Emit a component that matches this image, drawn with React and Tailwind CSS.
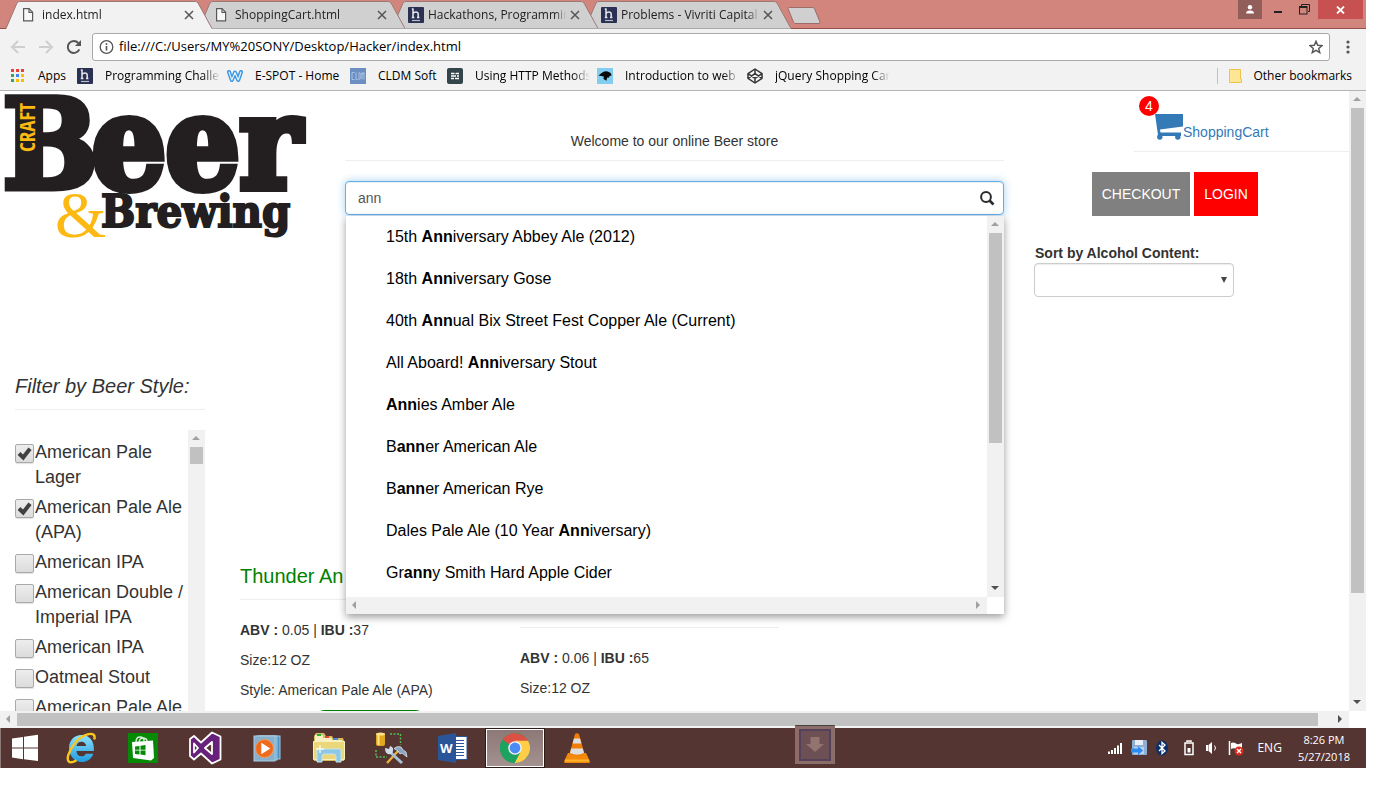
import React from "react";

const uiFont = "font-['Open_Sans','Noto_Sans',sans-serif]";
const pageFont = "font-['Liberation_Sans',Arial,sans-serif]";

/* ---------- small icons ---------- */

function FileIcon() {
  return (
    <svg width="16" height="16" viewBox="0 0 16 16" fill="none" stroke="#5a5a5a" strokeWidth="1.2">
      <path d="M1.6 1.6h5.4l3.600 3.600v8.600H1.6z" fill="#f8f8f8" />
      <path d="M7 1.6v3.800h3.800" />
    </svg>
  );
}

function HIcon() {
  return (
    <svg width="16" height="16" viewBox="0 0 16 16">
      <rect width="16" height="16" rx="1" fill="#2a3152" />
      <path d="M5 1.5v9M5 6.5q1-1.4 3-1.4t2.2 2v3.4M3.8 2h1.5M3.8 10.5h2.6M9 10.5h2.4" stroke="#e8e8f0" strokeWidth="1.5" fill="none" />
      <path d="M4 13.5h8" stroke="#b9bccb" strokeWidth="1.2" />
    </svg>
  );
}

function AppsIcon() {
  const colors = ["#ea4335", "#ea4335", "#ea4335", "#34a853", "#4285f4", "#fbbc05", "#34a853", "#fbbc05", "#fbbc05"];
  return (
    <svg width="16" height="16" viewBox="0 0 16 16">
      {colors.map((c, i) => (
        <rect key={i} x={1 + (i % 3) * 5} y={1 + Math.floor(i / 3) * 5} width="3" height="3" fill={c} />
      ))}
    </svg>
  );
}

function WIcon() {
  return (
    <svg width="16" height="16" viewBox="0 0 16 16" fill="none" strokeLinejoin="round" strokeLinecap="round">
      <path d="M2 4l2.800 8L8 4.500l3.200 7.500L14 4" stroke="#3d96e2" strokeWidth="4" />
      <path d="M2 4l2.800 8L8 4.500l3.200 7.500L14 4" stroke="#e4f3fd" strokeWidth="1.200" />
    </svg>
  );
}

function CldmIcon() {
  return (
    <svg width="16" height="16" viewBox="0 0 16 16">
      <rect width="16" height="16" fill="#6b8fc3" />
      <path d="M4.500 4.500H2v7h2.500M6 4.500v7h2M9 4.500v7q2 0 2-3.500t-2-3.500M12 11.500v-7l1 2 1-2v7" stroke="#a9c1e3" fill="none" />
    </svg>
  );
}

function HttpIcon() {
  return (
    <svg width="16" height="16" viewBox="0 0 16 16">
      <rect width="16" height="16" rx="2" fill="#33444a" />
      <path d="M4 5.500h3.500M8.500 5.500H12M4 8h5M10 8h2M4 10.500h3M8 10.500h4" stroke="#fff" strokeWidth="1.6" />
    </svg>
  );
}

function BirdIcon() {
  return (
    <svg width="16" height="16" viewBox="0 0 16 16">
      <rect width="16" height="16" fill="#83cdf0" />
      <path d="M1.500 7.500l2.500-2q3-2.700 6.500-2 4 1 4 4l-2 .5-.4 1.500-2.100.3-.5 3-3-1.800.3-2.500z" fill="#080808" />
    </svg>
  );
}

function CodepenIcon() {
  return (
    <svg width="16" height="16" viewBox="0 0 16 16" fill="none" stroke="#333" strokeWidth="1.5" strokeLinejoin="round">
      <path d="M8 1l7 4.700v4.600L8 15l-7-4.700V5.700z" />
      <path d="M1 5.700l7 4.700 7-4.700M1 10.300l7-4.700 7 4.700M8 1v4.600M8 10.400V15" />
    </svg>
  );
}

function CloseX() {
  return (
    <svg width="10" height="10" viewBox="0 0 10 10" stroke="#555" strokeWidth="1.5">
      <path d="M1 1l8 8M9 1l-8 8" />
    </svg>
  );
}

/* ---------- browser chrome ---------- */

const tabs = [
  { title: "index.html", icon: <FileIcon />, active: true, z: "z-40" },
  { title: "ShoppingCart.html", icon: <FileIcon />, z: "z-30" },
  { title: "Hackathons, Programmin", icon: <HIcon />, z: "z-20" },
  { title: "Problems - Vivriti Capital", icon: <HIcon />, z: "z-10" },
];

function Tab({ title, icon, active, z }) {
  const fill = active ? "#f2f2f2" : "#d0d0d0";
  return (
    <div className={`relative -mr-[13px] flex h-full w-[206px] items-center pt-px pr-4 pl-4 ${z}`}>
      <svg className="absolute inset-0 h-full w-full" viewBox="0 0 206 29" preserveAspectRatio="none">
        <path d="M0 29L11 3q1-2 3-2h175q2 0 3 2L206 29z" fill={fill} />
        <path d="M0 28.500L11 3q1-1.500 3-1.500h175q2 0 3 1.500L206 28.500" fill="none" stroke="#9b7a76" />
        {active ? null : <path d="M0 28.500H206" stroke="#aaa" />}
      </svg>
      <button className="relative flex items-center gap-1 text-left">
        <span className="shrink-0">{icon}</span>
        <span className="w-[138px] overflow-hidden whitespace-nowrap [mask-image:linear-gradient(to_right,#000_92%,transparent)]">{title}</span>
      </button>
      <button aria-label="Close tab" className="relative ml-1 shrink-0">
        <CloseX />
      </button>
    </div>
  );
}

function TabStrip() {
  return (
    <div className="flex h-[29px] items-stretch border-b border-[#94504e] bg-[#d1857c] pl-[6px]">
      <div className="-mb-px flex text-[12px] text-[#222]">
        {tabs.map((t) => (
          <Tab key={t.title} {...t} />
        ))}
      </div>
      <button aria-label="New tab" className="ml-[9px] self-start pt-[7px]">
        <svg width="34" height="17" viewBox="0 0 34 17">
          <path d="M1 1.500Q1 .5 2.500.5H25.500q1.500 0 2 1.200L33 15q.3 1.500-1 1.500H9q-2 0-2.500-1.200z" fill="#d0d0d0" stroke="#9b6c68" />
        </svg>
      </button>
      <div className="ml-auto flex h-[19px] items-stretch pr-[3px]">
        <button aria-label="Profile" className="flex w-6 items-center justify-center bg-[#915e59]">
          <svg width="10" height="10" viewBox="0 0 10 10" fill="#fff">
            <circle cx="5" cy="2.300" r="2.200" />
            <path d="M1 8.500Q1 5.500 5 5.500T9 8.500z" />
          </svg>
        </button>
        <button aria-label="Minimize" className="flex w-8 items-center justify-center pt-1">
          <span className="h-[2px] w-2 bg-[#222]" />
        </button>
        <button aria-label="Restore" className="flex w-6 items-center pl-[5px]">
          <svg width="11" height="11" viewBox="0 0 11 11" fill="none" stroke="#222">
            <path d="M2.500 2V.5h8v7H9" />
            <rect x=".5" y="2.500" width="7.500" height="7.500" />
            <path d="M.5 3.500H8" />
          </svg>
        </button>
        <button aria-label="Close" className="flex w-[45px] items-center justify-center bg-[#c75050]">
          <svg width="9" height="8" viewBox="0 0 9 8" stroke="#fff" strokeWidth="1.800">
            <path d="M1 .5l7 7M8 .5l-7 7" />
          </svg>
        </button>
      </div>
    </div>
  );
}

function AddressBar() {
  return (
    <div className="flex h-9 items-center pr-4 pl-[10px]">
      <button aria-label="Back" className="w-7">
        <svg width="16" height="16" viewBox="0 0 16 16" fill="none" stroke="#cfcfcf" strokeWidth="2">
          <path d="M15 8H2.500M8 2L2 8l6 6" />
        </svg>
      </button>
      <button aria-label="Forward" className="w-7">
        <svg width="16" height="16" viewBox="0 0 16 16" fill="none" stroke="#cfcfcf" strokeWidth="2">
          <path d="M1 8h12.500M8 2l6 6-6 6" />
        </svg>
      </button>
      <button aria-label="Reload" className="w-[26px]">
        <svg width="16" height="16" viewBox="0 0 16 16" fill="none" stroke="#555" strokeWidth="2">
          <path d="M13.300 10.300A6 6 0 1 1 12.300 4" />
          <path d="M15 1v6H9z" fill="#555" stroke="none" />
        </svg>
      </button>
      <div className="flex h-7 min-w-0 flex-1 items-center gap-1 rounded-[3px] border border-[#a9a9a9] bg-white px-[6px]">
        <svg width="16" height="16" viewBox="0 0 16 16" fill="none" stroke="#555">
          <circle cx="7.500" cy="8" r="6.300" strokeWidth="1.300" />
          <path d="M7.500 7v4.500M7.500 4.300V6" strokeWidth="1.600" />
        </svg>
        <input
          aria-label="Address"
          defaultValue="file:///C:/Users/MY%20SONY/Desktop/Hacker/index.html"
          className="min-w-0 flex-1 bg-transparent text-[13px] text-black outline-none"
        />
        <svg width="14" height="14" viewBox="0 0 14 14" fill="none" stroke="#555" strokeWidth="1.400">
          <path d="M7 1.200l1.700 4.100 4.400.3-3.400 2.800 1.100 4.300L7 10.400l-3.800 2.300 1.100-4.300L.9 5.600l4.400-.3z" />
        </svg>
      </div>
      <button aria-label="Menu" className="ml-4">
        <svg width="4" height="14" viewBox="0 0 4 14" fill="#555">
          <circle cx="2" cy="2" r="1.600" />
          <circle cx="2" cy="7" r="1.600" />
          <circle cx="2" cy="12" r="1.600" />
        </svg>
      </button>
    </div>
  );
}

const bookmarks = [
  { label: "Apps", icon: <AppsIcon />, width: "w-[28px]" },
  { label: "Programming Challe", icon: <HIcon />, width: "w-[110px]", fade: true },
  { label: "E-SPOT - Home", icon: <WIcon />, width: "w-[84px]" },
  { label: "CLDM Soft", icon: <CldmIcon />, width: "w-[58px]" },
  { label: "Using HTTP Methods", icon: <HttpIcon />, width: "w-[110px]", fade: true },
  { label: "Introduction to web", icon: <BirdIcon />, width: "w-[110px]", fade: true },
  { label: "jQuery Shopping Car", icon: <CodepenIcon />, width: "w-[110px]", fade: true },
];

function BookmarkBar() {
  return (
    <div className="flex h-[26px] items-center gap-[11px] border-b border-[#b4b4b4] pr-[14px] pb-1 pl-[10px] text-[12px] text-black">
      {bookmarks.map((b) => (
        <a key={b.label} href="#bookmark" className="flex items-center gap-3">
          {b.icon}
          <span
            className={`${b.width} whitespace-nowrap ${b.fade ? "-mr-1 box-content overflow-hidden pr-[5px] [mask-image:linear-gradient(to_right,#000_85%,transparent)]" : ""}`}
          >
            {b.label}
          </span>
        </a>
      ))}
      <div className="ml-auto flex items-center gap-[11px]">
        <span className="h-4 w-px bg-[#c0c0c0]" />
        <svg width="13" height="14" viewBox="0 0 13 14">
          <path d="M.5.500h11v9.500h1v3.500h-12z" fill="#ffe694" stroke="#ecc44e" />
        </svg>
        <a href="#other">Other bookmarks</a>
      </div>
    </div>
  );
}

/* ---------- scrollbars ---------- */

function Arrow({ dir, dark }) {
  const paths = {
    up: "M0 6h8L4 2z",
    down: "M0 2h8L4 6z",
    left: "M6 0v8L2 4z",
    right: "M2 0v8l4-4z",
  };
  return (
    <span className="flex size-[17px] shrink-0 items-center justify-center pr-px pb-px">
      <svg width="8" height="8" viewBox="0 0 8 8" fill={dark ? "#505050" : "#a0a0a0"}>
        <path d={paths[dir]} />
      </svg>
    </span>
  );
}

function VScroll({ thumb }) {
  return (
    <div aria-hidden="true" className="flex w-[17px] shrink-0 flex-col bg-[#f1f1f1]">
      <Arrow dir="up" />
      <div className="min-h-0 flex-1 px-[2px]">
        <div className={`bg-[#c1c1c1] ${thumb}`} />
      </div>
      <Arrow dir="down" dark />
    </div>
  );
}

function HScroll({ thumb, dark }) {
  return (
    <div aria-hidden="true" className="mr-[17px] flex h-[17px] shrink-0 bg-[#f1f1f1]">
      <Arrow dir="left" />
      <div className="min-w-0 flex-1 py-[2px]">
        <div className={`h-full bg-[#c1c1c1] ${thumb}`} />
      </div>
      <Arrow dir="right" dark={dark} />
    </div>
  );
}

/* ---------- store page ---------- */

function Logo() {
  const slab = "'DejaVu Serif Condensed','DejaVu Serif',serif";
  return (
    <svg width="310" height="150" viewBox="0 0 310 150" role="img" aria-label="Craft Beer & Brewing">
      <g fontFamily={slab} fontWeight="700" fill="#231f20" stroke="#231f20" strokeLinejoin="miter">
        <text x="3" y="97" fontSize="124" strokeWidth="7">B</text>
        <text x="92" y="97" fontSize="129" strokeWidth="8">eer</text>
        <text x="101" y="136" fontSize="45" strokeWidth="2">Brewing</text>
      </g>
      <text
        transform="translate(35 61) rotate(-90)"
        fontFamily="'Open Sans Condensed','Open Sans',sans-serif"
        fontWeight="700"
        fontSize="21"
        fill="#fdb913"
      >
        CRAFT
      </text>
      <text x="55" y="146" fontFamily="'Liberation Serif',serif" fontSize="66" fill="#fdb913">&amp;</text>
    </svg>
  );
}

const suggestions = [
  ["15th ", "Ann", "iversary Abbey Ale (2012)"],
  ["18th ", "Ann", "iversary Gose"],
  ["40th ", "Ann", "ual Bix Street Fest Copper Ale (Current)"],
  ["All Aboard! ", "Ann", "iversary Stout"],
  ["", "Ann", "ies Amber Ale"],
  ["B", "ann", "er American Ale"],
  ["B", "ann", "er American Rye"],
  ["Dales Pale Ale (10 Year ", "Ann", "iversary)"],
  ["Gr", "ann", "y Smith Hard Apple Cider"],
];

function Search() {
  return (
    <div className="relative mt-5">
      <div className="flex h-[34px] items-center rounded border border-[#66afe9] bg-white px-2 shadow-[inset_0_1px_1px_rgba(0,0,0,0.075),0_0_8px_rgba(102,175,233,0.6)]">
        <input
          aria-label="Search beers"
          defaultValue="ann"
          className="min-w-0 flex-1 bg-transparent px-1 text-[14px] text-[#555] outline-none"
        />
        <button aria-label="Search">
          <svg width="16" height="16" viewBox="0 0 16 16" fill="none" stroke="#2b2b2b">
            <circle cx="7" cy="7" r="4.900" strokeWidth="2" />
            <path d="M10.500 10.500l4 4" strokeWidth="2.600" />
          </svg>
        </button>
      </div>
      <div className="absolute top-[35px] right-0 left-px z-10 bg-white shadow-[0_3px_8px_rgba(0,0,0,0.4)]">
        <div className="flex h-[381px]">
          <ul className="min-w-0 flex-1 overflow-hidden text-[16px] text-black">
            {suggestions.map(([a, b, c]) => (
              <li key={a + b + c} className="h-[42px] pl-10 leading-[42px] whitespace-nowrap">
                {a}
                <strong className="font-bold">{b}</strong>
                {c}
              </li>
            ))}
          </ul>
          <VScroll thumb="h-[210px]" />
        </div>
        <HScroll thumb="hidden" />
      </div>
    </div>
  );
}

function CartIcon() {
  return (
    <svg width="29" height="26" viewBox="0 0 29 26" fill="#337ab7">
      <path d="M0 0h28v12.500L5 15.500l.5 3H26v2.500H3z" />
      <circle cx="4.800" cy="23" r="2.700" />
      <circle cx="22.800" cy="23" r="2.700" />
      <path d="M3 20.500h23v1.500H3z" />
    </svg>
  );
}

function AccountPanel() {
  return (
    <div className="w-[345px] shrink-0 pl-[30px]">
      <div className="ml-[100px] flex h-[61px] items-end border-b border-[#eee] pb-[9px] pl-[21px]">
        <a href="#cart" className="relative flex items-end text-[14px] text-[#337ab7]">
          <span className="pb-[2px]">
            <CartIcon />
          </span>
          <span className="-ml-px leading-5">ShoppingCart</span>
          <span className="absolute -top-[18px] -left-4 flex size-5 items-center justify-center rounded-full bg-[#f00] text-white">4</span>
        </a>
      </div>
      <div className="mt-5 ml-[58px] flex gap-1 text-[14px] text-white">
        <button className="h-11 w-[98px] bg-[#808080]">CHECKOUT</button>
        <button className="h-11 w-16 bg-[#f00]">LOGIN</button>
      </div>
      <label htmlFor="alcohol" className="mt-[27px] block pl-px text-[14px] leading-5 font-bold text-[#333]">
        Sort by Alcohol Content:
      </label>
      <div className="relative w-[200px]">
        <select
          id="alcohol"
          className="block h-[34px] w-full appearance-none rounded border border-[#ccc] bg-white px-3 text-[14px] shadow-[inset_0_1px_1px_rgba(0,0,0,0.075)]"
        >
          <option value=""></option>
          <option value="low">Low to High</option>
          <option value="high">High to Low</option>
        </select>
        <svg className="pointer-events-none absolute top-[14px] right-[7px]" width="6" height="6" viewBox="0 0 6 6" fill="#444">
          <path d="M0 0h6L3 6z" />
        </svg>
      </div>
    </div>
  );
}

const styles = [
  { name: "American Pale Lager", checked: true },
  { name: "American Pale Ale (APA)", checked: true },
  { name: "American IPA" },
  { name: "American Double / Imperial IPA" },
  { name: "American IPA" },
  { name: "Oatmeal Stout" },
  { name: "American Pale Ale" },
];

function StyleFilter() {
  return (
    <aside className="flex w-[205px] shrink-0 flex-col pl-[15px]">
      <h2 className="border-b border-[#eee] pb-[9px] text-[20px] leading-7 whitespace-nowrap text-[#333] italic">Filter by Beer Style:</h2>
      <div className="mt-5 flex min-h-0 flex-1 overflow-hidden">
        <ul className="flex min-w-0 flex-1 flex-col gap-[5px] pt-[10px]">
          {styles.map((s, i) => (
            <li key={i} className="flex text-[18px] leading-[25px] text-[#333]">
              <span className="relative mt-1 mr-px size-[19px] shrink-0">
                <input
                  id={`style-${i}`}
                  type="checkbox"
                  defaultChecked={s.checked}
                  className="peer block size-[19px] appearance-none rounded-[2px] border border-[#a9a9a9] bg-linear-to-b from-[#ededed] to-[#dcdcdc] shadow-[0_1px_1px_rgba(0,0,0,0.12)]"
                />
                <svg
                  className="pointer-events-none absolute inset-0 hidden peer-checked:block"
                  width="19"
                  height="19"
                  viewBox="0 0 19 19"
                  fill="none"
                  stroke="#404040"
                  strokeWidth="4"
                >
                  <path d="M4 9.500l4.200 4L15 4.800" />
                </svg>
              </span>
              <label htmlFor={`style-${i}`}>{s.name}</label>
            </li>
          ))}
        </ul>
        <div aria-hidden="true" className="w-[17px] shrink-0 bg-[#f1f1f1]">
          <Arrow dir="up" />
          <div className="mx-[2px] h-[17px] bg-[#c1c1c1]" />
        </div>
      </div>
    </aside>
  );
}

function ProductCard({ title, abv, ibu, size, style }) {
  return (
    <article className="w-[259px] shrink-0 text-[14px] leading-5 text-[#333]">
      <h3 className={`border-b border-[#eee] text-[20px] leading-7 text-[green] ${title ? "pb-[9px]" : "h-[66px]"}`}>{title}</h3>
      <p className="mt-5">
        <b>ABV :</b> {abv} | <b>IBU :</b>
        {ibu}
      </p>
      <p className="mt-[10px]">Size:{size}</p>
      {style ? <p className="mt-[10px]">Style: {style}</p> : null}
      {style ? (
        <div className="mt-[10px] flex justify-center">
          <button aria-label="Add to cart" className="h-[34px] w-[114px] rounded-[12px] border-2 border-[green]" />
        </div>
      ) : null}
    </article>
  );
}

function StorePage() {
  return (
    <div className={`flex min-h-0 flex-1 flex-col overflow-hidden bg-white ${pageFont}`}>
      <div className="flex min-h-0 flex-1">
        <div className="flex min-w-0 flex-1 flex-col overflow-hidden">
          <header className="flex shrink-0">
            <div className="w-[345px] shrink-0">
              <Logo />
            </div>
            <div className="min-w-0 flex-1">
              <p className="border-b border-[#eee] pt-10 pb-[9px] text-center text-[14px] leading-5 text-[#333]">Welcome to our online Beer store</p>
              <Search />
            </div>
            <AccountPanel />
          </header>
          <main className="mt-[75px] flex min-h-0 flex-1 overflow-hidden">
            <StyleFilter />
            <section className="flex items-start gap-[21px] overflow-hidden pt-[190px] pl-[35px]">
              <ProductCard title="Thunder An" abv="0.05" ibu="37" size="12 OZ" style="American Pale Ale (APA)" />
              <ProductCard abv="0.06" ibu="65" size="12 OZ" />
            </section>
          </main>
        </div>
        <VScroll thumb="h-[485px]" />
      </div>
      <HScroll thumb="w-[calc(100%-14px)]" dark />
    </div>
  );
}

/* ---------- taskbar ---------- */

function WindowsIcon() {
  return (
    <svg width="28" height="28" viewBox="0 0 28 28" fill="#fff">
      <path d="M1 4.500l11-1.600V13.500H1zM13 2.800L27 .8V13.500H13zM1 14.500h11v10.700L1 23.600zM13 14.500h14V27l-14-1.800z" />
    </svg>
  );
}

function IeIcon() {
  return (
    <svg width="32" height="32" viewBox="0 0 32 32" fill="none">
      <defs>
        <linearGradient id="ie" x1="0" y1="0" x2="0" y2="1">
          <stop offset="0" stopColor="#8fe2fb" />
          <stop offset="1" stopColor="#1f9be0" />
        </linearGradient>
      </defs>
      <path d="M16.500 3C9.500 3 4 8.300 4 15.800S9.300 30 16.500 30c5.600 0 10-3 11.800-8.300h-7.500c-.8 1.700-2.200 2.600-4.300 2.600-3 0-4.900-2-5.100-5.300h17.500C29.500 9 24.600 3 16.500 3zm-5 11c.5-2.800 2.200-4.300 4.900-4.300s4.500 1.600 4.700 4.300z" fill="url(#ie)" />
      <path d="M29.300 7.500c.8-3 .3-4.500-1.800-5.300-4-1.400-12 2-17.500 8.800C3.500 19 1 27.500 4 29.700c1.700 1.200 4.500.4 7.500-1.500" stroke="#f8c61c" strokeWidth="2.400" />
    </svg>
  );
}

function StoreIcon() {
  return (
    <svg width="30" height="30" viewBox="0 0 30 30">
      <rect width="30" height="30" fill="#068a06" />
      <path d="M4 9l21-1.500 1 17.500-3 2.500L5 25z" fill="#fff" />
      <path d="M8 9q0-5 4-5t4 4M11 9q1-4.500 4.500-4T19 8" fill="none" stroke="#d7efd7" strokeWidth="1.400" />
      <path d="M7 13.500l4.500-.6v3.800H7zM12.500 12.700l5-.7v4.700h-5zM7 17.600h4.500v3.900L7 20.900zM12.500 17.600h5v4.700l-5-.7z" fill="#068a06" />
    </svg>
  );
}

function VisualStudioIcon() {
  return (
    <svg width="34" height="34" viewBox="0 0 34 34" stroke="#fff" strokeWidth="1.800" strokeLinejoin="round">
      <path
        d="M2 8l4-3 7 6.500L24 1.500l8.500 4v23l-8.500 4-11-10-7 6L2 25zM6 12.500v9l4-4.500zM17 17l7 6V11z"
        fill="#68217a"
        fillRule="evenodd"
      />
    </svg>
  );
}

function MediaIcon() {
  return (
    <svg width="28" height="28" viewBox="0 0 28 28">
      <rect x="6" y="2" width="21" height="23" fill="#4d8fbc" stroke="#9ccbe8" />
      <rect x="4" y="2" width="20" height="24" fill="#6ea6cc" stroke="#9ccbe8" />
      <rect x="1" y="2" width="21" height="25" fill="#86b0cc" stroke="#a9cde2" />
      <circle cx="11.500" cy="14.500" r="9" fill="#ee6a1c" stroke="#f59a5c" />
      <path d="M8.300 8.700l9 5.800-9 5.800z" fill="#fff" />
    </svg>
  );
}

function ExplorerIcon() {
  return (
    <svg width="34" height="32" viewBox="0 0 34 32">
      <path d="M2 4l2-3h8l2 3h6l1 2h10l1 3v20H2z" fill="#d7bc5d" />
      <path d="M3 3h8v3h9v2h10v2H3z" fill="#f7eec1" />
      <path d="M5 2h4v2H5z" fill="#1fb234" />
      <path d="M13 4h4v2h-4z" fill="#d84d33" />
      <path d="M21 6h5v2h-5z" fill="#3f8bd8" />
      <path d="M1.500 9.500h31v18h-31z" fill="#ecd67a" stroke="#f9f0bd" />
      <path d="M5 30V19q0-2 2-2h20q2 0 2 2v11h-5v-6q0-2-2-2H12q-2 0-2 2v6z" fill="#8cc8e4" stroke="#c4e4f2" />
      <path d="M8 13v8M4 17h8" stroke="#fff" strokeWidth="1.400" opacity=".8" />
    </svg>
  );
}

function ToolsIcon() {
  return (
    <svg width="34" height="34" viewBox="0 0 34 34" fill="none">
      <rect x="2" y="2" width="9" height="13" rx="2" fill="#e0a81e" />
      <path d="M4.500 3v11" stroke="#ffe58a" strokeWidth="2" />
      <ellipse cx="6.500" cy="3" rx="4.500" ry="1.600" fill="#ffe28a" />
      <path d="M16 3h10.500v11M2 19v7h11" stroke="#4fc04f" strokeWidth="1.500" strokeDasharray="2 1.500" />
      <path d="M13 32l12-13" stroke="#e9b23c" strokeWidth="2.400" />
      <path d="M20 17.500q3-3 7-1.500l2 3 3 2 1 5-5-4-2 1-2-3z" fill="#8ba4be" stroke="#dce6f2" strokeWidth=".8" />
      <path d="M15 20l13 12" stroke="#a9bfd4" strokeWidth="3" />
      <path d="M11 17l4 1 1-3q4 1 3 5t-5 3q-3-1-3-6z" fill="#cfdcec" />
    </svg>
  );
}

function WordIcon() {
  return (
    <svg width="30" height="32" viewBox="0 0 30 32">
      <rect x="15" y="4.500" width="14" height="23" fill="#fff" stroke="#2a5699" />
      <path d="M18 8.500h8M18 11.500h8M18 14.500h8M18 17.500h8M18 20.500h8M18 23.500h8" stroke="#2a5699" />
      <path d="M0 4L18 1v30L0 28z" fill="#2a5699" />
      <text x="2" y="20.500" fontFamily="'Open Sans',sans-serif" fontWeight="700" fontSize="13" fill="#fff">W</text>
    </svg>
  );
}

function ChromeIcon() {
  return (
    <svg width="30" height="30" viewBox="0 0 30 30">
      <circle cx="15" cy="15" r="15" fill="#1da260" />
      <path d="M15 15L2.500 6.700A15 15 0 0 1 28 7.800z" fill="#dd5144" />
      <path d="M15 7.800H28.100A15 15 0 0 1 14.500 30L20.800 18z" fill="#ffcd46" />
      <path d="M2.500 6.700L9 18l6 3.500 5.800-3.500L14.500 30A15 15 0 0 1 2.500 6.700z" fill="#1da260" />
      <circle cx="15" cy="15" r="6.800" fill="#f4f4f4" />
      <circle cx="15" cy="15" r="5.400" fill="#4c8bf5" />
    </svg>
  );
}

function VlcIcon() {
  return (
    <svg width="26" height="30" viewBox="0 0 26 30">
      <path d="M4 20h18l4 8.500q0 1.500-1.500 1.500h-23Q0 30 0 28.500z" fill="#f48a0c" />
      <path d="M11 1q2-1.500 4 0l5.500 20q-7.500 4-15 0z" fill="#f07d07" />
      <path d="M10 5.500h6l1.400 5H8.600zM7.200 15.500h11.600l1.200 4.500q-7 3.500-14 0z" fill="#dedede" />
      <path d="M1 27.500h24" stroke="#ffb52e" strokeWidth="2" />
    </svg>
  );
}

const taskApps = [
  { name: "Internet Explorer", icon: <IeIcon /> },
  { name: "Store", icon: <StoreIcon /> },
  { name: "Visual Studio", icon: <VisualStudioIcon /> },
  { name: "Media Player", icon: <MediaIcon /> },
  { name: "File Explorer", icon: <ExplorerIcon /> },
  { name: "SQL Tools", icon: <ToolsIcon /> },
  { name: "Word", icon: <WordIcon /> },
  { name: "Chrome", icon: <ChromeIcon />, active: true },
  { name: "VLC", icon: <VlcIcon /> },
];

function Tray() {
  return (
    <div className="ml-auto flex items-center pr-4 text-white">
      <svg className="mr-2" width="16" height="14" viewBox="0 0 16 14" fill="#fff">
        <path d="M1 10.500h2V13H1zM4 9h2v4H4zM7 7h2v6H7zM10 4.500h2V13h-2zM13 2h2v11h-2z" />
      </svg>
      <svg className="mr-2" width="16" height="16" viewBox="0 0 16 16">
        <rect x="1" y="0" width="15" height="15" rx="1" fill="#8eafd6" />
        <rect x="4" y="0" width="8" height="5" fill="#e8eff8" />
        <path d="M3 7h10v7H3z" fill="#bdd1ea" />
        <path d="M0 8.500h7V6l5 4.500L7 15v-2.500H0z" fill="#2a8cf0" />
      </svg>
      <svg className="mr-[14px]" width="14" height="16" viewBox="0 0 14 16">
        <ellipse cx="7" cy="8" rx="6" ry="7.500" fill="#0a2f66" />
        <path d="M4 5l6 6-3 2.500v-11L10 5l-6 6" fill="none" stroke="#fff" strokeWidth="1.300" />
      </svg>
      <svg className="mr-[10px]" width="12" height="16" viewBox="0 0 12 16" fill="none" stroke="#fff" strokeWidth="1.500">
        <path d="M4 2V1h4v1M2 3h8v11.500H2z" />
        <path d="M4.500 8h3v4.500h-3z" fill="#fff" stroke="none" />
      </svg>
      <svg className="mr-[10px]" width="13" height="14" viewBox="0 0 13 14" fill="#fff">
        <path d="M1 4h2v6H1zM3.500 4L7 1v12l-3.500-3z" />
        <path d="M9.500 4.500q2 2.500 0 5" fill="none" stroke="#fff" />
      </svg>
      <svg className="mr-[13px]" width="16" height="16" viewBox="0 0 16 16">
        <path d="M1.500 1v14" stroke="#fff" strokeWidth="1.500" />
        <path d="M3 3q3-1 5 .5t6-.5v6q-3 1.500-5.500 0T3 9z" fill="#fff" />
        <circle cx="11" cy="11" r="4.500" fill="#d92a1c" />
        <path d="M9 9l4 4M13 9l-4 4" stroke="#fff" strokeWidth="1.400" />
      </svg>
      <span className="mr-4 text-[12px]">ENG</span>
      <span className="text-center text-[11px] leading-[17px]">
        8:26 PM
        <br />
        5/27/2018
      </span>
    </div>
  );
}

function Taskbar() {
  return (
    <footer className={`relative flex h-10 shrink-0 items-stretch border-l border-[#8d7a78] bg-[#543532] ${uiFont}`}>
      <button aria-label="Start" className="mr-[3px] flex w-12 items-center justify-center">
        <WindowsIcon />
      </button>
      <div className="flex gap-1 py-px">
        {taskApps.map((a) => (
          <button
            key={a.name}
            aria-label={a.name}
            className={`flex w-[58px] items-center justify-center ${
              a.active ? "border border-white bg-linear-to-b from-[#8d7876] to-[#a39290] outline outline-[#2e1c1a]" : ""
            }`}
          >
            {a.icon}
          </button>
        ))}
      </div>
      <div className="absolute -top-[3px] left-[794px] flex h-[39px] w-10 items-center justify-center border border-[#86706f] border-t-[#444] bg-[#8d6b67]">
        <div className="flex size-8 items-center justify-center border-2 border-[#54415a] bg-[#6d5053]">
          <svg width="18" height="16" viewBox="0 0 18 16" fill="#93736f">
            <path d="M4.500 0h9v7H18l-9 8-9-8h4.500z" />
          </svg>
        </div>
      </div>
      <Tray />
    </footer>
  );
}

export default function App() {
  return (
    <div className="h-screen overflow-hidden bg-white pr-2 pb-[18px]">
      <div className="flex h-full flex-col">
        <div className={`shrink-0 bg-[#f2f2f2] ${uiFont}`}>
          <TabStrip />
          <AddressBar />
          <BookmarkBar />
        </div>
        <StorePage />
        <Taskbar />
      </div>
    </div>
  );
}
